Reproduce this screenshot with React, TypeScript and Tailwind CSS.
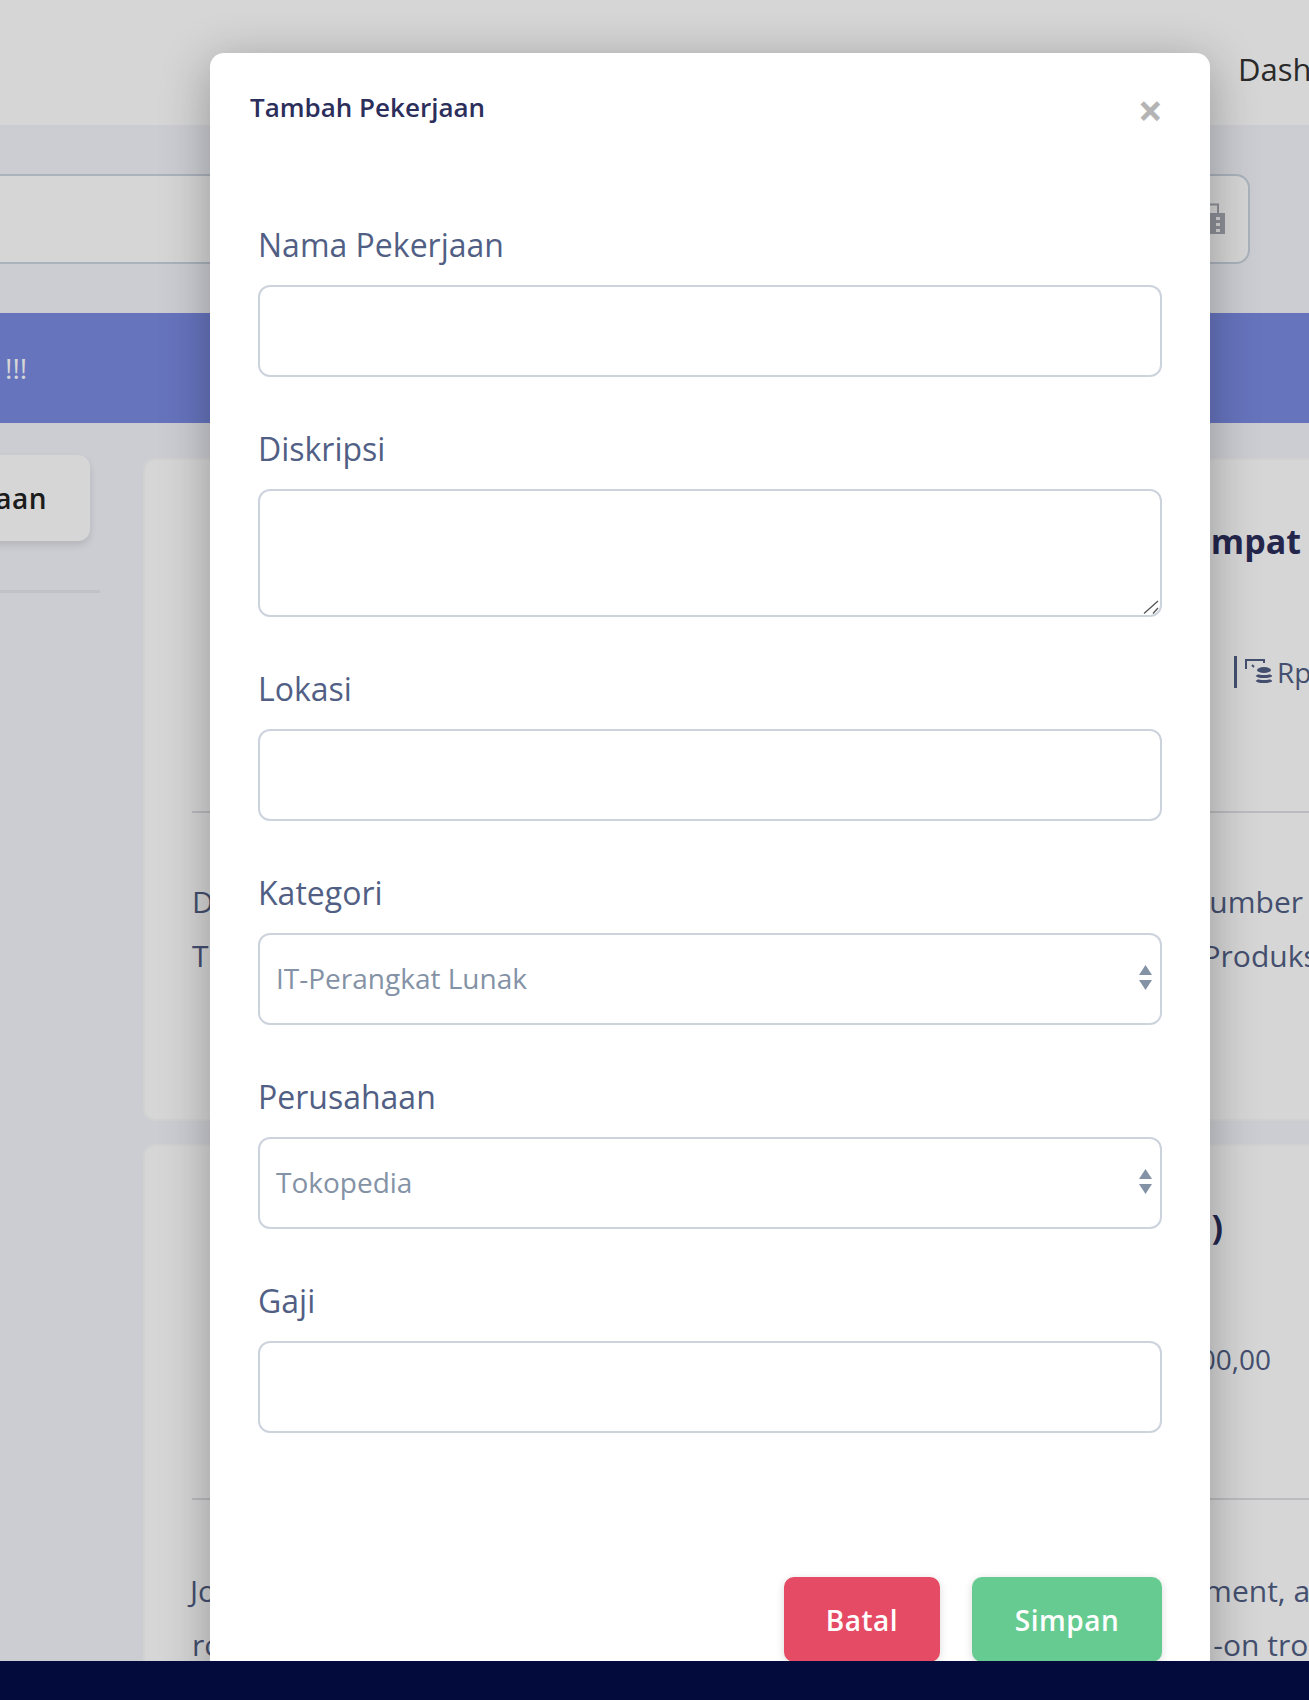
import React from 'react';

const fieldClass =
  'block w-full h-[92px] rounded-[12px] border-2 border-[#cdd3dd] bg-white px-4 text-[28px] text-[#8492a6] outline-none';

const Field = ({ label, children }: { label: string; children: React.ReactNode }) => (
  <div className="mb-[48px]">
    <label className="mb-4 block text-[32px] leading-[48px] text-[#525f85]">{label}</label>
    {children}
  </div>
);

const SelectField = ({ label, value }: { label: string; value: string }) => (
  <Field label={label}>
    <div className="relative">
      <select defaultValue={value} className={`${fieldClass} appearance-none pb-[2px]`}>
        <option>{value}</option>
      </select>
      <svg className="absolute right-[10px] top-[32px] w-[13px] h-[25px]" viewBox="0 0 13 25" fill="#8492a6">
        <path d="M6.5 0 13 10H0Z" />
        <path d="M0 15h13L6.5 25Z" />
      </svg>
    </div>
  </Field>
);

const App = () => {
  return (
    <div className="relative h-[1700px] overflow-hidden bg-[#f4f5fb] font-['Open_Sans',sans-serif]">
      {/* halaman di belakang modal */}
      <nav className="h-[125px] bg-white pl-[1238px] pt-[47px] text-[31px] leading-[44px] text-[#333] whitespace-nowrap">
        Dashboard
      </nav>
      <div className="pt-[49px]">
        <div className="-ml-[20px] flex h-[90px] w-[1270px] items-center justify-end rounded-[14px] border-2 border-[#cbd5e0] bg-white pr-[23px]">
          <svg className="w-[28px] h-[32px]" viewBox="0 0 28 32" fill="#a8acb4">
            <path d="M2 10V1.5h19V10" fill="none" stroke="#a8acb4" strokeWidth="2" />
            <path fillRule="evenodd" d="M8 10h20v21H8ZM19 14v3h4v-3ZM19 20v3h4v-3ZM19 26v3h4v-3Z" />
          </svg>
        </div>
      </div>
      <div className="mt-[49px] flex h-[110px] items-center bg-[#7a8be3] pl-[5px] text-[28px] text-white">!!!</div>

      <div className="mt-[32px] flex items-start">
        <div className="-ml-[210px] w-[310px] shrink-0">
          <button className="flex h-[86px] w-[300px] items-center justify-end rounded-[12px] bg-white pr-[43px] text-[28px] font-semibold tracking-[0.5px] text-[#222] shadow-[0_4px_8px_rgba(0,0,0,0.12)] whitespace-nowrap">
            Tambah Pekerjaan
          </button>
          <div className="mt-[49px] h-[3px] bg-[#e8e8ec]" />
        </div>
        <div className="ml-[43px] mt-[3px] w-[1300px] shrink-0 text-[30px] text-[#525f85]">
          <div className="h-[663px] rounded-[12px] border-2 border-[#f9fafb] bg-white pl-[47px]">
            <div className="flex h-[162px] w-[1109px] items-center justify-end text-[34px] font-bold text-[#2c2e5b]">
              Tempat
            </div>
            <div className="ml-[1042px] flex items-center gap-[8px] pt-[29px] whitespace-nowrap">
              <span className="h-[32px] w-[3px] bg-[#525f85]" />
              <svg className="w-[27px] h-[27px]" viewBox="0 0 27 27" fill="none" stroke="#525f85" strokeWidth="2">
                <path d="M1 10V1h18v3" />
                <path d="M7 6l2 2" />
                <ellipse cx="19" cy="11" rx="7" ry="3" fill="#525f85" stroke="none" />
                <path d="M12 16c1 2 13 2 14 0M12 21c1 2 13 2 14 0" strokeWidth="3" />
              </svg>
              <span className="-ml-[3px] text-[28px]">Rp</span>
            </div>
            <div className="mt-[118px] h-[2px] bg-[#dfe0e4]" />
            <div className="mt-[62px] flex w-[1111px] justify-between leading-[54px]">
              <span>D</span>
              <span>umber</span>
            </div>
            <div className="flex gap-[994px] leading-[54px] whitespace-nowrap">
              <span>T</span>
              <span>Produksi</span>
            </div>
          </div>
          <div className="mt-[23px] h-[700px] rounded-[12px] border-2 border-[#f9fafb] bg-white pl-[47px]">
            <div className="flex h-[160px] w-[1031px] items-center justify-end text-[34px] font-bold text-[#2c2e5b]">)</div>
            <div className="flex w-[1079px] justify-end pt-[32px] text-[28px]">00,00</div>
            <div className="mt-[118px] h-[2px] bg-[#dfe0e4]" />
            <div className="mt-[64px] flex w-[1300px] gap-[988px] leading-[54px] whitespace-nowrap">
              <span className="-ml-[2px]">Jo</span>
              <span>ment, a</span>
            </div>
            <div className="flex w-[1300px] gap-[991px] leading-[54px] whitespace-nowrap">
              <span>ro</span>
              <span>-on tro</span>
            </div>
          </div>
        </div>
      </div>

      {/* modal */}
      <div className="absolute inset-0 bg-black/[0.16]">
        <div className="absolute left-[210px] top-[53px] h-[1700px] w-[1000px] rounded-[14px] bg-white shadow-[0_10px_50px_rgba(0,0,0,0.3)]">
          <div className="flex items-start justify-between pl-[40px] pr-[47px] pt-[29px]">
            <h2 className="text-[26px] font-semibold leading-[50px] text-[#2c2e5b]">Tambah Pekerjaan</h2>
            <span className="pt-[3px] text-[44px] font-bold leading-[50px] text-[#b4b4b4]">×</span>
          </div>
          <form className="px-[48px] pt-[86px]">
            <Field label="Nama Pekerjaan">
              <input className={fieldClass} />
            </Field>
            <Field label="Diskripsi">
              <div className="relative">
                <textarea className={`${fieldClass} h-[128px] resize-none`} />
                <svg className="absolute right-[3px] bottom-[3px] w-[16px] h-[14px]" viewBox="0 0 16 14" fill="none" stroke="#555" strokeWidth="1.3">
                  <path d="M1 13.5 15 1M10 13.5 15 8" />
                </svg>
              </div>
            </Field>
            <Field label="Lokasi">
              <input className={fieldClass} />
            </Field>
            <SelectField label="Kategori" value="IT-Perangkat Lunak" />
            <SelectField label="Perusahaan" value="Tokopedia" />
            <Field label="Gaji">
              <input className={fieldClass} />
            </Field>
            <div className="flex justify-end gap-[32px] pt-[96px]">
              <button type="button" className="h-[85px] w-[156px] rounded-[10px] bg-[#e54b65] text-[28px] font-semibold tracking-[0.5px] text-white shadow-[0_2px_8px_rgba(0,0,0,0.15)]">
                Batal
              </button>
              <button type="button" className="h-[85px] w-[190px] rounded-[10px] bg-[#66cb91] text-[28px] font-semibold tracking-[0.5px] text-white shadow-[0_2px_8px_rgba(0,0,0,0.15)]">
                Simpan
              </button>
            </div>
          </form>
        </div>
      </div>
      <div className="absolute inset-x-0 bottom-0 h-[39px] bg-[#020b3b]" />
    </div>
  );
};

export default App;
